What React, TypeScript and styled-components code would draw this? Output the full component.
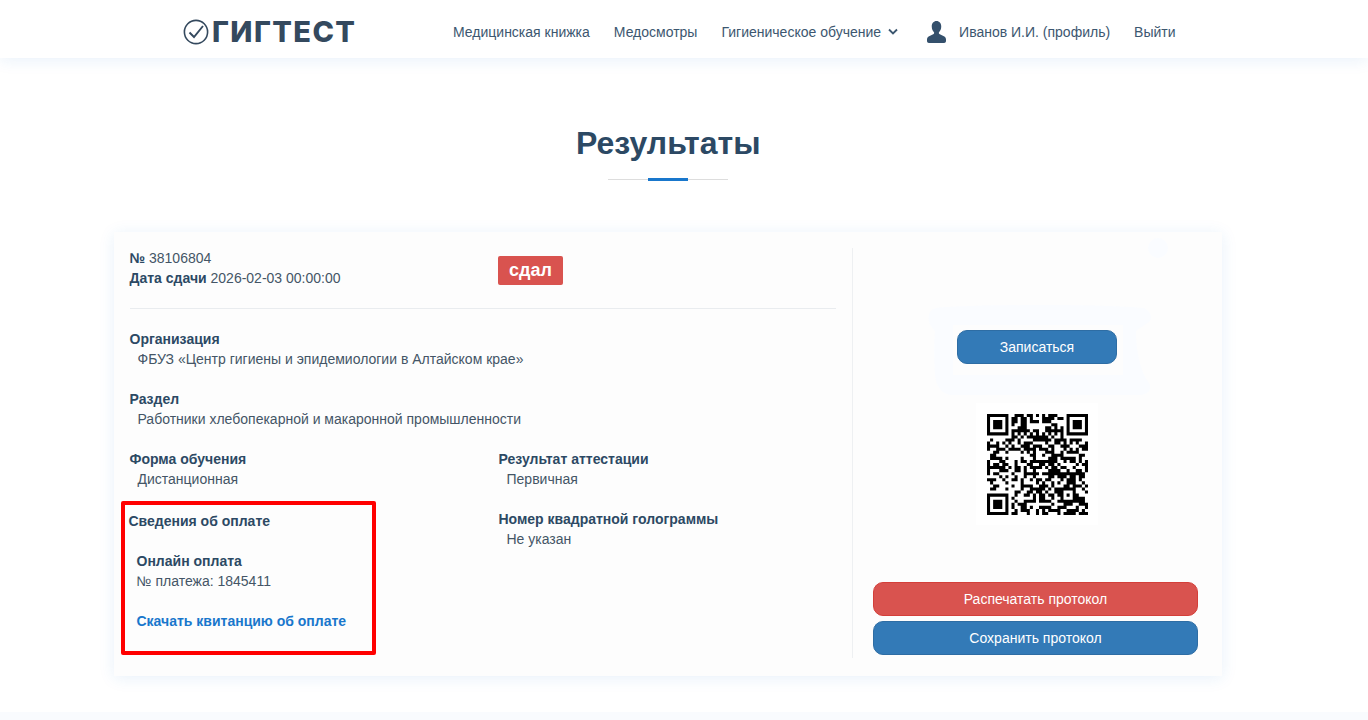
import React from "react";
import styled, { createGlobalStyle } from "styled-components";

const GlobalStyle = createGlobalStyle`
  html, body {
    margin: 0;
    padding: 0;
    background: #fff;
    font-family: "Liberation Sans", Arial, sans-serif;
    font-size: 14px;
    line-height: 20px;
    color: #445566;
  }
  * { box-sizing: border-box; }
`;

const Page = styled.div`
  height: 720px;
  overflow: hidden;
  display: flex;
  flex-direction: column;
`;

const Header = styled.header`
  height: 58px;
  flex: none;
  display: flex;
  align-items: center;
  padding: 6px 0 0 183px;
  background: #fff;
  box-shadow: 0 2px 15px rgba(25, 119, 204, 0.1);
`;

const Logo = styled.a`
  display: flex;
  align-items: center;
  gap: 3px;
  width: 270px;
  color: #34495e;
  font-family: Inter, "Liberation Sans", sans-serif;
  font-size: 29px;
  letter-spacing: 1.4px;
  font-weight: 800;
  line-height: 32px;
`;

const Nav = styled.nav`
  display: flex;
  align-items: center;
  gap: 24px;
`;

const NavLink = styled.a`
  display: flex;
  align-items: center;
  color: #2c4964;
  opacity: 0.92;
  white-space: nowrap;
`;

const Profile = styled.div`
  display: flex;
  align-items: center;
  gap: 13px;
  margin-left: 5px;
`;

const Main = styled.main`
  flex: 1;
  padding: 67px 32px 0 0;
  display: flex;
  flex-direction: column;
  align-items: center;
`;

const Title = styled.h2`
  position: relative;
  margin: 0 0 71px;
  width: 184px;
  text-align: center;
  font-size: 32px;
  line-height: 36px;
  font-weight: 700;
  color: #2c4964;
  white-space: nowrap;

  &::before {
    content: "";
    position: absolute;
    left: 32px;
    bottom: -19px;
    width: 120px;
    height: 1px;
    background: #ddd;
  }

  &::after {
    content: "";
    position: absolute;
    left: 72px;
    bottom: -20px;
    width: 40px;
    height: 3px;
    background: #1977cc;
  }
`;

const Card = styled.section`
  position: relative;
  width: 1108px;
  height: 444px;
  display: flex;
  padding: 16px 0 18px 15.5px;
  background: #fdfdfd;
  box-shadow: 0 2px 15px rgba(25, 119, 204, 0.1);
`;

const LeftCol = styled.div`
  width: 723.5px;
  padding-right: 16px;
  border-right: 1px solid #eef0f2;
`;

const Summary = styled.div`
  display: flex;
  height: 61px;
  border-bottom: 1px solid #e9ecef;
`;

const SummaryText = styled.div`
  width: 368.5px;
`;

const Badge = styled.span`
  align-self: flex-start;
  margin-top: 8px;
  padding: 0 11px;
  height: 29px;
  line-height: 29px;
  border-radius: 2px;
  background: #d9534f;
  color: #fff;
  font-size: 18px;
  font-weight: 700;
`;

const Fields = styled.div`
  padding-top: 20px;
  display: grid;
  grid-template-columns: 369px 1fr;
  row-gap: 20px;
`;

const Field = styled.div<{ $wide?: boolean }>`
  grid-column: ${({ $wide }) => ($wide ? "1 / -1" : "auto")};
`;

const Label = styled.div`
  font-weight: 700;
  color: #2c4964;
`;

const Value = styled.div`
  padding-left: 8px;
`;

const PaymentBox = styled.div`
  position: relative;
  width: 255px;
  height: 154px;
  margin: -8px 0 0 -8.5px;
  padding: 6px 0 0 3.5px;
  border: 4px solid #f00;
  border-radius: 2px;
`;

const PaymentDetails = styled.div`
  padding: 20px 0 0 8px;
`;

const DownloadLink = styled.a`
  display: block;
  margin-top: 20px;
  font-weight: 700;
  color: #1977cc;
`;

const RightCol = styled.div`
  position: relative;
  flex: 1;
  display: flex;
  flex-direction: column;
  align-items: center;
  padding: 82px 1px 3px 0;
`;

const Blob = styled.svg`
  position: absolute;
  left: 75px;
  top: 57px;
  width: 225px;
  height: 90px;
`;

const Dot = styled.span`
  position: absolute;
  right: 54px;
  top: -10px;
  width: 20px;
  height: 20px;
  border-radius: 50%;
  background: #fafcff;
`;

const Button = styled.button<{ $tone: "blue" | "red"; $small?: boolean }>`
  position: relative;
  display: block;
  width: ${({ $small }) => ($small ? "160px" : "100%")};
  height: 34px;
  padding: 0;
  font: inherit;
  color: #fff;
  text-align: center;
  border-radius: 10px;
  border: 1px solid ${({ $tone }) => ($tone === "red" ? "#d43f3a" : "#2e6da4")};
  background: ${({ $tone }) => ($tone === "red" ? "#d9534f" : "#337ab7")};
`;

const QrBox = styled.div`
  position: relative;
  width: 122px;
  height: 122px;
  margin-top: 39px;
  display: flex;
  align-items: center;
  justify-content: center;
  background: #fff;
`;

const Actions = styled.div`
  margin: auto 0 0 20px;
  align-self: flex-start;
  width: 325px;
  display: flex;
  flex-direction: column;
  gap: 5px;
`;

const Footer = styled.footer`
  height: 8px;
  flex: none;
  background: #f9fbfe;
`;

const CheckLogo = () => (
  <svg width="26" height="26" viewBox="0 0 26 26" fill="none" stroke="#34495e">
    <circle cx="13" cy="13" r="11.6" strokeWidth="1.6" />
    <path d="M6.500 13.500l4.500 4.500L20 7" strokeWidth="1.9" />
  </svg>
);

const Chevron = () => (
  <svg width="10" height="8" viewBox="0 0 10 8" fill="none" stroke="#2c4964" strokeWidth="1.8" style={{ marginLeft: 7 }}>
    <path d="M1 1.5l4 4 4-4" />
  </svg>
);

const UserIcon = () => (
  <svg width="19" height="22" viewBox="0 0 20 22" preserveAspectRatio="none" fill="#34506c">
    <path d="M10 0c3 0 5 2.300 5 5.500 0 2.300-1 4.300-2.200 5.500-.5.500-.5 1.500.2 1.900l4.800 2.300c1.300.7 2.200 1.700 2.200 3.300v1.500c0 1.100-.9 2-2 2H2c-1.100 0-2-.9-2-2v-1.500c0-1.600.9-2.600 2.200-3.300L7 12.900c.7-.4.700-1.400.2-1.900C6 9.800 5 7.800 5 5.500 5 2.300 7 0 10 0z" />
  </svg>
);

// QR modules: fixed patterns plus a seeded fill, 33x33
const QR_SIZE = 33;

const isFinder = (x: number, y: number, ox: number, oy: number) => {
  const dx = x - ox;
  const dy = y - oy;
  if (dx < -1 || dy < -1 || dx > 7 || dy > 7) return null;
  if (dx < 0 || dy < 0 || dx > 6 || dy > 6) return false;
  if (dx === 0 || dy === 0 || dx === 6 || dy === 6) return true;
  return dx !== 1 && dy !== 1 && dx !== 5 && dy !== 5;
};

const qrModule = (x: number, y: number) => {
  const finders = [isFinder(x, y, 0, 0), isFinder(x, y, 26, 0), isFinder(x, y, 0, 26)];
  for (const f of finders) if (f !== null) return f;
  const ax = Math.abs(x - 26);
  const ay = Math.abs(y - 26);
  if (ax <= 2 && ay <= 2) return Math.max(ax, ay) !== 1;
  if (y === 6) return x % 2 === 0;
  if (x === 6) return y % 2 === 0;
  const h = Math.sin(x * 12.9898 + y * 78.233) * 43758.5453;
  return h - Math.floor(h) > 0.5;
};

const qrPath = () => {
  let d = "";
  for (let y = 0; y < QR_SIZE; y++) {
    for (let x = 0; x < QR_SIZE; x++) {
      if (qrModule(x, y)) d += `M${x} ${y}h1v1h-1z`;
    }
  }
  return d;
};

const QrCode = () => (
  <svg width="101" height="101" viewBox="0 0 33 33">
    <path d={qrPath()} fill="#000" />
  </svg>
);

export default function App() {
  return (
    <Page>
      <GlobalStyle />
      <Header>
        <Logo>
          <CheckLogo />
          ГИГТЕСТ
        </Logo>
        <Nav>
          <NavLink>Медицинская книжка</NavLink>
          <NavLink>Медосмотры</NavLink>
          <NavLink>
            Гигиеническое обучение
            <Chevron />
          </NavLink>
          <Profile>
            <UserIcon />
            <NavLink>Иванов И.И. (профиль)</NavLink>
          </Profile>
          <NavLink>Выйти</NavLink>
        </Nav>
      </Header>
      <Main>
        <Title>Результаты</Title>
        <Card>
          <LeftCol>
            <Summary>
              <SummaryText>
                <div>
                  <Label as="b">№</Label> 38106804
                </div>
                <div>
                  <Label as="b">Дата сдачи</Label> 2026-02-03 00:00:00
                </div>
              </SummaryText>
              <Badge>сдал</Badge>
            </Summary>
            <Fields>
              <Field $wide>
                <Label>Организация</Label>
                <Value>ФБУЗ «Центр гигиены и эпидемиологии в Алтайском крае»</Value>
              </Field>
              <Field $wide>
                <Label>Раздел</Label>
                <Value>Работники хлебопекарной и макаронной промышленности</Value>
              </Field>
              <Field>
                <Label>Форма обучения</Label>
                <Value>Дистанционная</Value>
              </Field>
              <Field>
                <Label>Результат аттестации</Label>
                <Value>Первичная</Value>
              </Field>
              <PaymentBox>
                <Label>Сведения об оплате</Label>
                <PaymentDetails>
                  <Label>Онлайн оплата</Label>
                  <div>№ платежа: 1845411</div>
                  <DownloadLink>Скачать квитанцию об оплате</DownloadLink>
                </PaymentDetails>
              </PaymentBox>
              <Field>
                <Label>Номер квадратной голограммы</Label>
                <Value>Не указан</Value>
              </Field>
            </Fields>
          </LeftCol>
          <RightCol>
            <Dot />
            <Blob viewBox="0 0 225 90">
              <path
                fillRule="evenodd"
                fill="#fafcff"
                d="M8 3C50 -1 180 -1 215 3c8 2 10 10 6 14-6 4-10 6-13 9 0 20 4 40 13 52 3 6 0 11-8 12H25C14 90 8 82 7 70c-1-18-1-32 0-44-4-4-8-10-6-16 1-4 3-6 7-7zM25 20V70H195V20z"
              />
            </Blob>
            <Button $tone="blue" $small>
              Записаться
            </Button>
            <QrBox>
              <QrCode />
            </QrBox>
            <Actions>
              <Button $tone="red">Распечатать протокол</Button>
              <Button $tone="blue">Сохранить протокол</Button>
            </Actions>
          </RightCol>
        </Card>
      </Main>
      <Footer />
    </Page>
  );
}
